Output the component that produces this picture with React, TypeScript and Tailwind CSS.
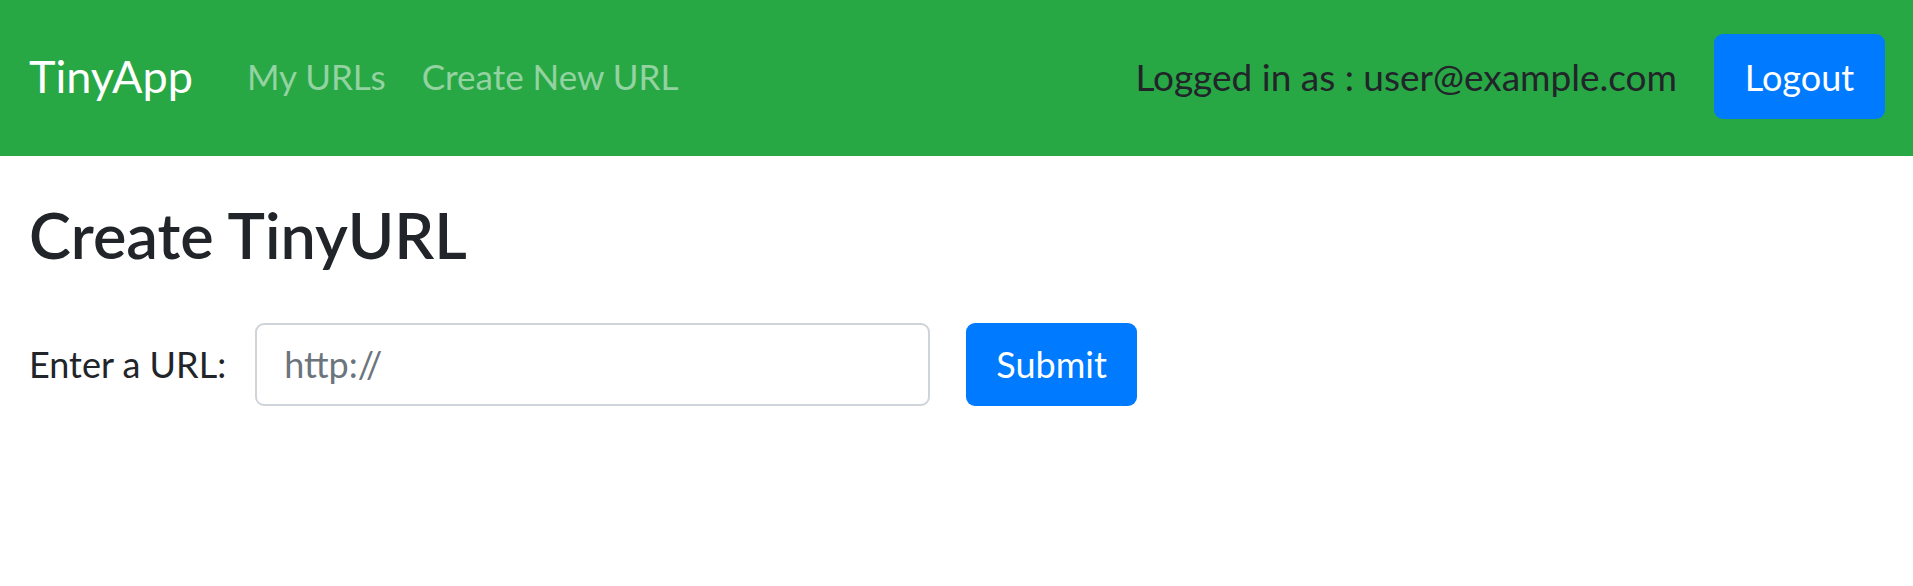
export default function App() {
  return (
    <div className="min-h-screen bg-white font-['Lato','Noto_Sans',sans-serif] text-[#212529]">
      {/* navbar */}
      <nav className="h-[156px] bg-[#28a745] flex items-center pl-[29px] pr-[28px]">
        <a href="#" className="text-[45px] leading-none text-white mr-[36px] -mt-[3px]">TinyApp</a>
        <a href="#" className="text-[35px] leading-none text-white/50 px-[18px] -mt-[3px]">My URLs</a>
        <a href="#" className="text-[35px] leading-none text-white/50 px-[18px] -mt-[3px]">Create New URL</a>
        <div className="ml-auto flex items-center gap-[37px]">
          <span className="text-[37px] leading-none text-[#212529] -mt-[3px]">Logged in as : user@example.com</span>
          <button className="h-[85px] w-[171px] -mt-[3px] bg-[#007bff] text-white text-[36px] rounded-[9px]">Logout</button>
        </div>
      </nav>

      <main className="px-[29px]">
        <h1 className="mt-[41px] text-[63px] leading-[1.2] font-semibold">Create TinyURL</h1>
        <form className="flex items-center mt-[50px]" onSubmit={e => e.preventDefault()}>
          <label className="text-[36px] mr-[29px]">Enter a URL:</label>
          <input
            type="text"
            placeholder="http://"
            className="w-[675px] h-[83px] px-[27px] text-[36px] border-2 border-[#ced4da] rounded-[9px] placeholder:text-[#6c757d] outline-none"
          />
          <button className="ml-[36px] h-[83px] w-[171px] bg-[#007bff] text-white text-[36px] rounded-[9px]">Submit</button>
        </form>
      </main>
    </div>
  )
}
